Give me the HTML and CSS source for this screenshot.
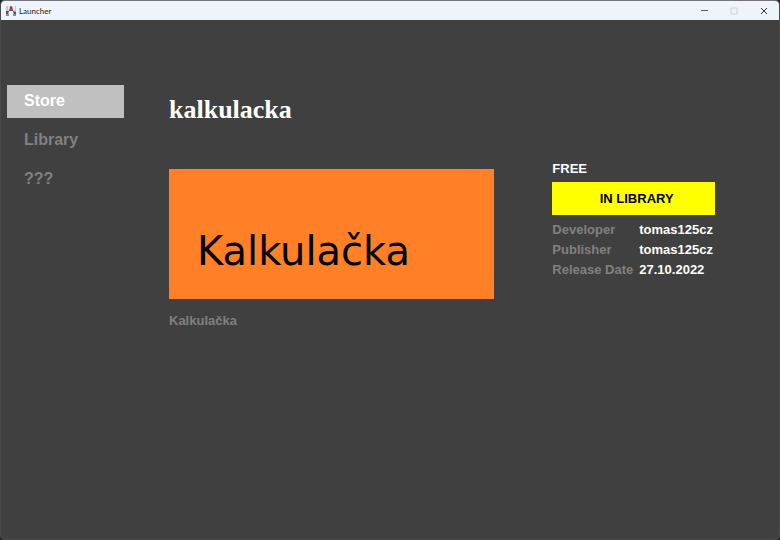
FILE: index.html
```html
<!DOCTYPE html>
<html lang="en">
<head>
<meta charset="utf-8">
<title>Launcher</title>
<link rel="stylesheet" href="styles.css">
</head>
<body>
<div class="window">
  <header class="titlebar">
    <svg class="app-icon" viewBox="0 0 12 12" aria-hidden="true">
      <path fill="#bdc9d4" d="M1 1h10v9H1z"/>
      <path fill="#edf1f5" d="M3 1h2v4H3zM8 1h2v4H8z"/>
      <path fill="#4b5965" d="M1 6h3l1-5 2 1 1 4 3 1v3H9l-1-1H4l-1 1H1z"/>
      <path fill="#f4f7fa" d="M4 6h4l1 4H3z"/>
      <path fill="#d8332a" d="M5 3h2l1 2-2 1-1-1z"/>
      <path fill="#7d91a2" d="M1 9h3v2H1zM8 9h3v2H8z"/>
    </svg>
    <span class="title">Launcher</span>
    <div class="controls">
      <button type="button" aria-label="Minimize"><svg viewBox="0 0 8 8"><path d="M1 3.5h7" stroke="#555b60"/></svg></button>
      <button type="button" aria-label="Maximize" disabled><svg viewBox="0 0 8 8"><rect x="1" y="1" width="6" height="6" rx=".5" fill="none" stroke="#cbd0d4"/></svg></button>
      <button type="button" aria-label="Close"><svg viewBox="0 0 8 8"><path d="M1 1l6 6M7 1L1 7" stroke="#34383c"/></svg></button>
    </div>
  </header>
  <div class="content">
    <nav class="menu">
      <a class="active" href="#store">Store</a>
      <a href="#library">Library</a>
      <a href="#other">???</a>
    </nav>
    <main class="product">
      <h1>kalkulacka</h1>
      <div class="columns">
        <section class="overview">
          <div class="banner">Kalkulačka</div>
          <p>Kalkulačka</p>
        </section>
        <aside class="purchase">
          <div class="price">FREE</div>
          <button class="library-button" type="button">IN LIBRARY</button>
          <dl>
            <dt>Developer</dt><dd>tomas125cz</dd>
            <dt>Publisher</dt><dd>tomas125cz</dd>
            <dt>Release Date</dt><dd>27.10.2022</dd>
          </dl>
        </aside>
      </div>
    </main>
  </div>
</div>
</body>
</html>
```
FILE: styles.css
```css
* { box-sizing: border-box; }
body {
  margin: 0;
  background: #26242a;
  color: #fff;
  font: bold 13px/20px "Liberation Sans", Arial, sans-serif;
}
button { padding: 0; border: 0; font: inherit; }
.window {
  display: flex;
  flex-direction: column;
  min-height: 100vh;
  overflow: hidden;
  border: 1px solid #4b494c;
  border-top-color: #77747c;
  border-radius: 5px;
  background: #404040;
}
.titlebar {
  display: flex;
  align-items: center;
  height: 19px;
  padding-left: 4px;
  background: #eff4fb;
  color: #202020;
}
.app-icon { width: 12px; height: 12px; }
.title { margin-left: 2px; font: 8px/16px Lato, sans-serif; }
.controls { display: flex; margin-left: auto; }
.controls button {
  display: flex;
  align-items: center;
  justify-content: center;
  width: 30px;
  height: 18px;
  background: transparent;
}
.controls svg { width: 8px; height: 8px; }
.content {
  display: grid;
  grid-template-columns: 15vw 1fr;
  column-gap: 45px;
  padding: 65px 64px 24px 6px;
}
.menu { display: flex; flex-direction: column; gap: 6px; }
.menu a {
  padding: 0 17px 2px;
  color: #808080;
  font-size: 16px;
  line-height: 31px;
  text-decoration: none;
}
.menu .active { background: #c0c0c0; color: #fff; }
h1 {
  margin: 8px 0 0;
  font: bold 26px/34px "Liberation Serif", "Times New Roman", serif;
}
.columns {
  display: grid;
  grid-template-columns: 2fr 1fr;
  column-gap: 58px;
  margin-top: 32px;
}
.overview { padding-top: 10px; }
.banner {
  height: 130px;
  padding: 56px 28px 0;
  background: #ff8027;
  color: #000;
  font: 40px/52px "DejaVu Sans", sans-serif;
}
.overview p { margin: 12px 0 0; color: #808080; }
.library-button {
  display: block;
  width: 100%;
  height: 33px;
  margin-top: 3px;
  padding-left: 6px;
  background: #ff0;
  color: #000;
}
dl {
  display: grid;
  grid-template-columns: max-content 1fr;
  column-gap: 6px;
  margin: 5px 0 0;
}
dt { color: #808080; }
dd { margin: 0; }
```
